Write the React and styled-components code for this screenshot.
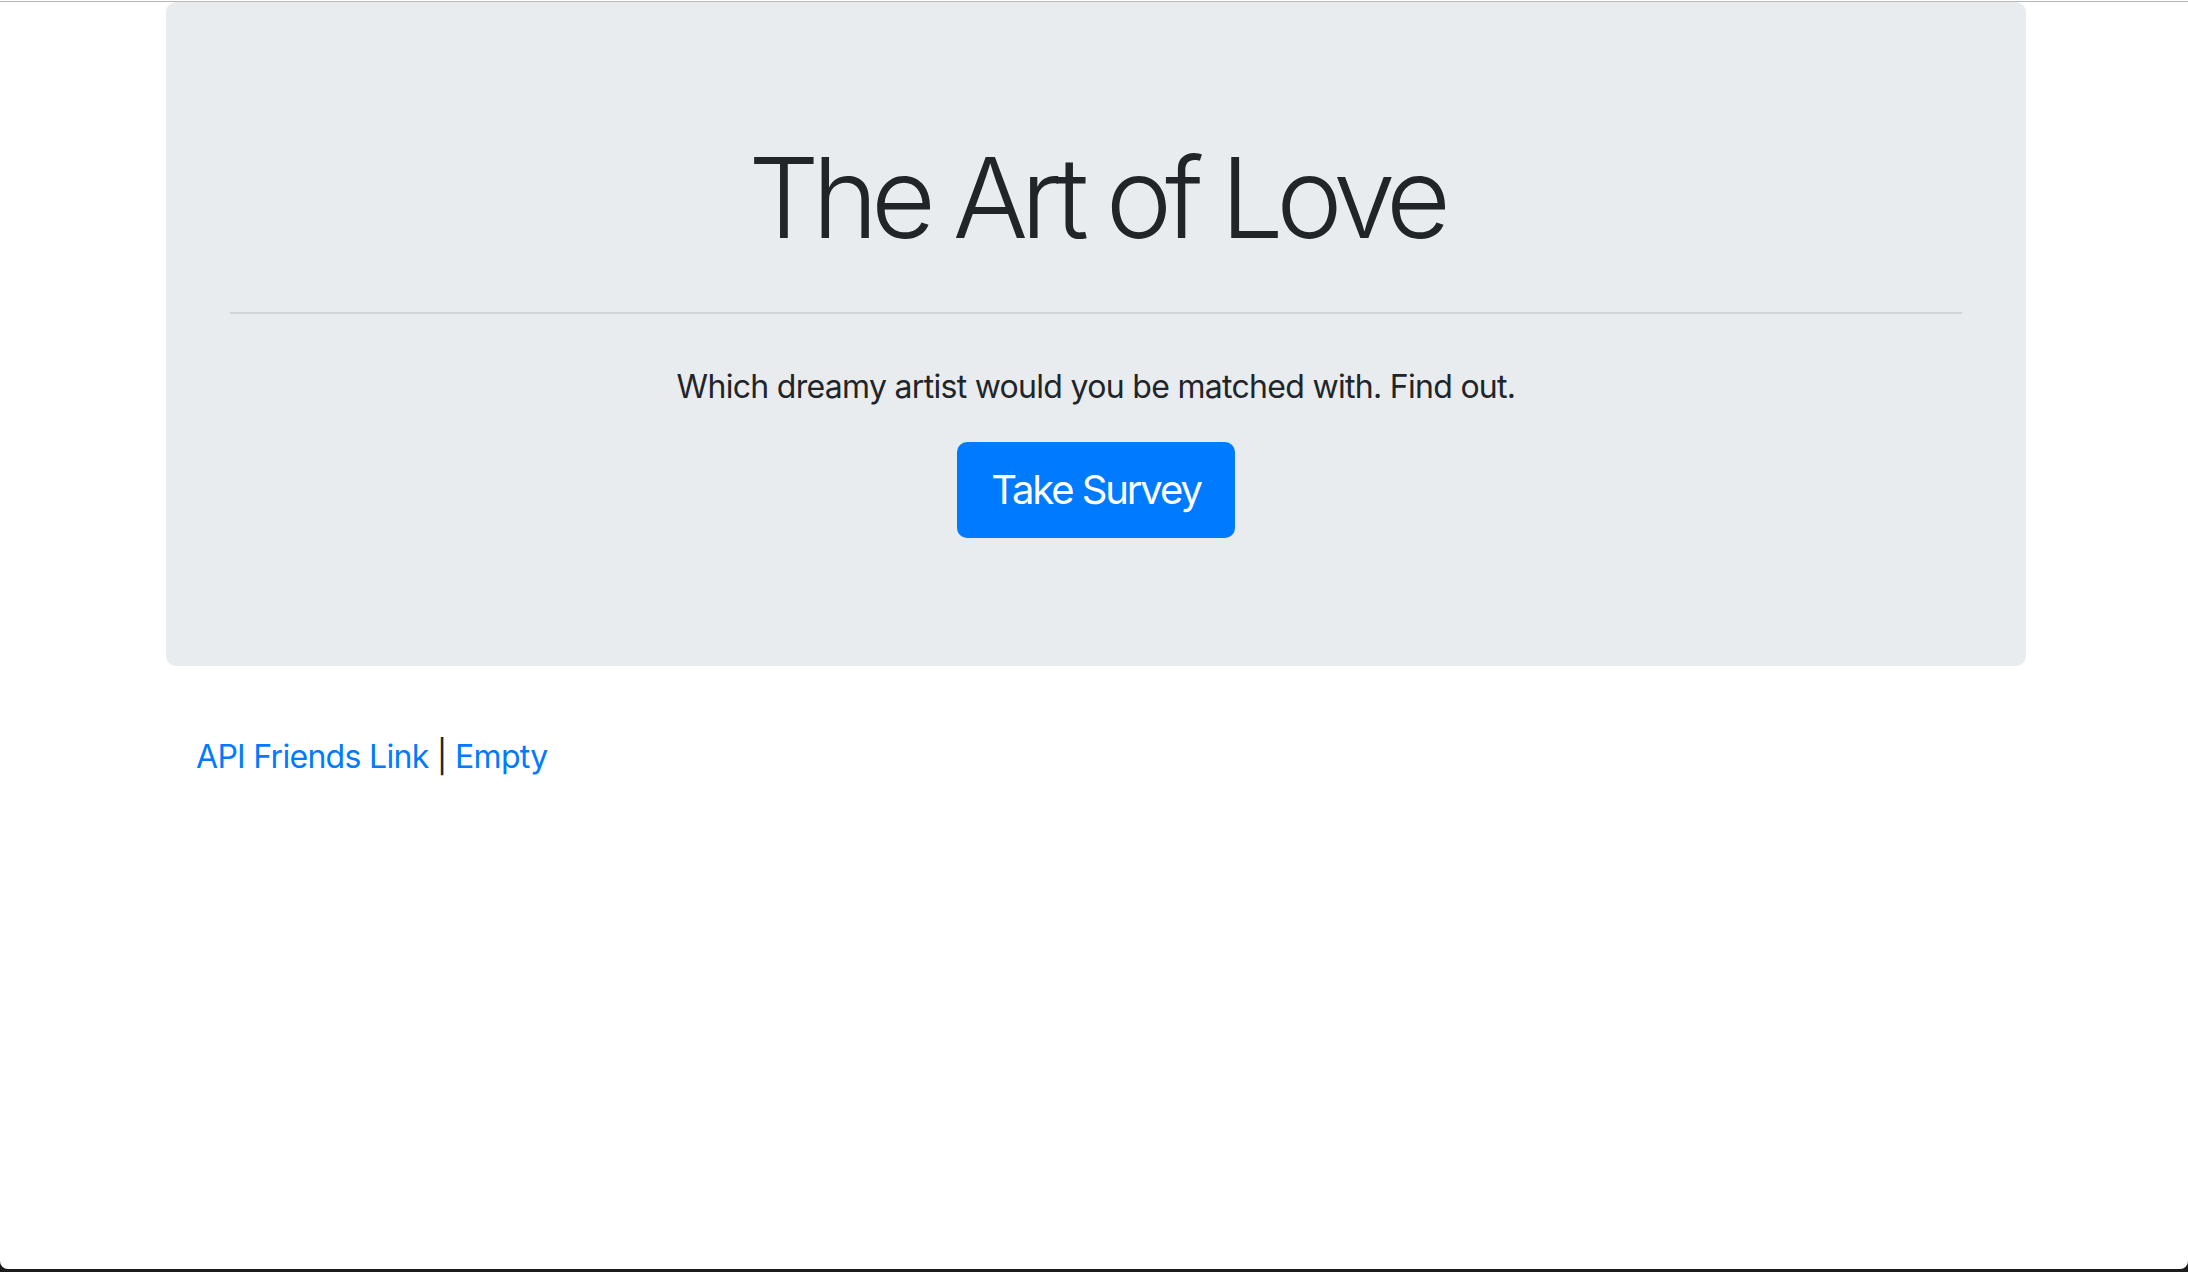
import React from "react"
import styled, { createGlobalStyle } from "styled-components"

const GlobalStyle = createGlobalStyle`
  html {
    background: #1c1c1c;
  }
  body {
    margin: 0;
    font-family: Inter, "Liberation Sans", sans-serif;
    color: #212529;
  }
  * {
    box-sizing: border-box;
  }
`

const Page = styled.div`
  height: 1269px;
  padding-top: 2px;
  background: #fff;
  border-radius: 0 0 8px 8px;
  box-shadow: inset 0 1px 0 #fff, inset 0 2px 0 #b8b8b8;
  overflow: hidden;
`

const Container = styled.div`
  width: 1860px;
  margin-left: 166px;
`

const Jumbotron = styled.div`
  background: #e9ecef;
  border-radius: 10px;
  padding: 128px 64px;
  margin-bottom: 64px;
  display: flex;
  flex-direction: column;
  align-items: center;
  text-align: center;
`

const Title = styled.h1`
  margin: 0;
  font-size: 112px;
  font-weight: 300;
  line-height: 1.2;
  letter-spacing: -7.3px;
`

const Rule = styled.hr`
  align-self: stretch;
  margin: 48px 0;
  border: 0;
  border-top: 2px solid rgba(0, 0, 0, 0.1);
`

const Lead = styled.p`
  margin: 0 0 32px;
  padding-top: 1px;
  font-size: 32px;
  line-height: 48px;
  letter-spacing: -0.7px;
`

const Button = styled.a`
  display: inline-block;
  margin-top: -1px;
  padding: 16px 32px;
  font-size: 40px;
  line-height: 60px;
  letter-spacing: -2.1px;
  color: #fff;
  background: #007bff;
  border: 2px solid #007bff;
  border-radius: 10px;
  text-decoration: none;
  cursor: pointer;
`

const Links = styled.div`
  padding: 3px 30px 0;
  font-size: 32px;
  line-height: 48px;
  letter-spacing: -0.7px;
`

const Link = styled.a`
  color: #007bff;
  text-decoration: none;
  cursor: pointer;
`

const App = () => {
  return (
    <Page>
      <GlobalStyle />
      <Container>
        <Jumbotron>
          <Title>The Art of Love</Title>
          <Rule />
          <Lead>Which dreamy artist would you be matched with. Find out.</Lead>
          <Button>Take Survey</Button>
        </Jumbotron>
        <Links>
          <Link>API Friends Link</Link> | <Link>Empty</Link>
        </Links>
      </Container>
    </Page>
  )
}

export default App
